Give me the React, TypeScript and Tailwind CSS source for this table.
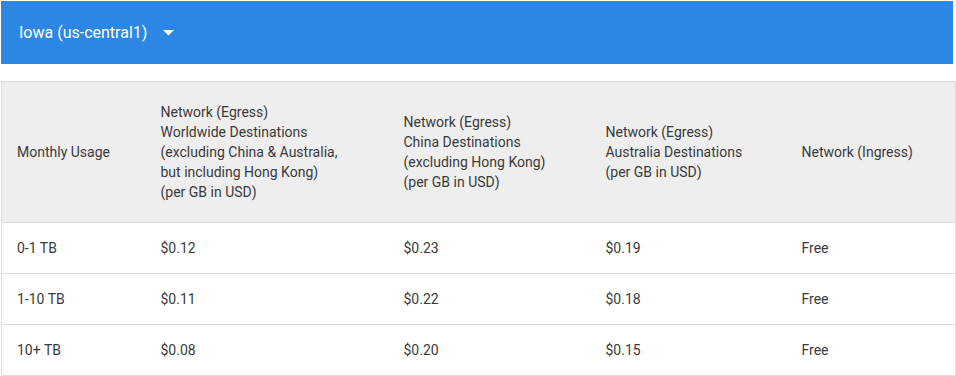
const headers = [
  ['Monthly Usage'],
  [
    'Network (Egress)',
    'Worldwide Destinations',
    '(excluding China & Australia,',
    'but including Hong Kong)',
    '(per GB in USD)',
  ],
  ['Network (Egress)', 'China Destinations', '(excluding Hong Kong)', '(per GB in USD)'],
  ['Network (Egress)', 'Australia Destinations', '(per GB in USD)'],
  ['Network (Ingress)'],
];

const rows = [
  ['0-1 TB', '$0.12', '$0.23', '$0.19', 'Free'],
  ['1-10 TB', '$0.11', '$0.22', '$0.18', 'Free'],
  ['10+ TB', '$0.08', '$0.20', '$0.15', 'Free'],
];

const widths = ['w-[144px]', 'w-[243px]', 'w-[202px]', 'w-[196px]', 'w-[169px]'];

export default function App() {
  return (
    <div className="w-[956px] h-[376px] bg-white font-['Roboto',sans-serif] pt-px">
      {/* Region selector */}
      <div className="ml-px w-[952px] h-[63px] bg-[#2b87e3] flex items-center pl-[18px]">
        <span className="text-white text-[16px] leading-none">Iowa (us-central1)</span>
        <svg className="ml-[16px] mt-px" width="11" height="6" viewBox="0 0 11 6">
          <path d="M0 0 L11 0 L5.5 5.5 Z" fill="white" />
        </svg>
      </div>

      {/* Pricing table */}
      <table className="mt-[17px] ml-px w-[954px] border-collapse table-fixed border border-[#dcdcdc] text-[14px] text-[#3a3a3a]">
        <thead>
          <tr className="bg-[#eeeeee] h-[141px]">
            {headers.map((lines, i) => (
              <th key={i} className={`${widths[i]} pl-[15px] text-left font-normal align-middle leading-5`}>
                {lines.map((l) => (
                  <div key={l}>{l}</div>
                ))}
              </th>
            ))}
          </tr>
        </thead>
        <tbody>
          {rows.map((r) => (
            <tr key={r[0]} className="h-[51px] border-t border-[#dcdcdc]">
              {r.map((c, i) => (
                <td key={i} className="pl-[15px] align-middle">
                  {c}
                </td>
              ))}
            </tr>
          ))}
        </tbody>
      </table>
    </div>
  );
}
